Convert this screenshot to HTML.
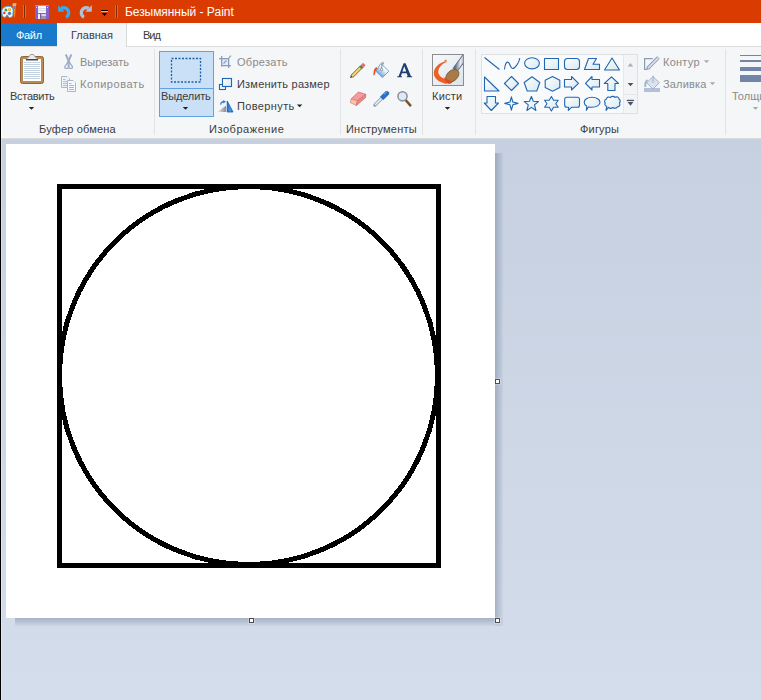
<!DOCTYPE html>
<html><head><meta charset="utf-8">
<style>
*{margin:0;padding:0;box-sizing:border-box}
html,body{width:761px;height:700px;overflow:hidden;background:#cdd6e5;font-family:"Liberation Sans",sans-serif}
.a{position:absolute}
.t{position:absolute;font-size:11px;line-height:11px;white-space:nowrap;color:#3c3c3c}
.g{color:#8a8a8a}
#title{left:0;top:0;width:761px;height:23px;background:#da3b01}
#tabs{left:0;top:23px;width:761px;height:23px;background:#fff}
#file{left:1px;top:23px;width:56px;height:23px;background:#1979ca}
#home{left:57px;top:23px;width:70px;height:24px;background:#f5f6f7;border-right:1px solid #dadbdc}
#ribbon{left:0;top:46px;width:761px;height:93px;background:#f5f6f7;border-top:1px solid #dadbdc;border-bottom:1px solid #d8d9d9}
#work{left:0;top:139px;width:761px;height:561px;background:linear-gradient(#c6d0e0,#d4ddeb)}
.sep{position:absolute;width:1px;background:#e2e3e4;top:49px;height:86px}
#lb{left:0;top:0;width:1px;height:700px;background:#000}
.h{position:absolute;width:5px;height:5px;background:#fff;border:1px solid #4e4e4e;box-shadow:0 0 0 1px rgba(255,255,255,.25)}
</style></head><body>
<div id="title" class="a"></div>
<div id="tabs" class="a"></div>
<div id="ribbon" class="a"></div>
<div id="file" class="a"></div>
<div id="home" class="a"></div>
<div id="work" class="a"></div>

<div class="t" style="left:125px;top:6px;font-size:12px;line-height:12px;color:#fff;letter-spacing:-0.06px">Безымянный - Paint</div>
<div class="t" style="left:16px;top:30px;color:#fff;letter-spacing:-0.33px">Файл</div>
<div class="t" style="left:71px;top:30px">Главная</div>
<div class="t" style="left:143px;top:30px;letter-spacing:-1px">Вид</div>

<div class="sep" style="left:154px"></div>
<div class="sep" style="left:340px"></div>
<div class="sep" style="left:422px"></div>
<div class="sep" style="left:475px"></div>
<div class="sep" style="left:725px"></div>

<div class="t" style="left:10px;top:91px;letter-spacing:-0.28px">Вставить</div>
<div class="t g" style="left:80px;top:57px">Вырезать</div>
<div class="t g" style="left:80px;top:79px;letter-spacing:0.55px">Копировать</div>
<div class="t" style="left:39px;top:124px;letter-spacing:0.18px">Буфер обмена</div>

<div class="a" style="left:159px;top:51px;width:55px;height:66px;background:#c9e0f7;border:1px solid #62a2e4"></div>
<div class="a" style="left:160px;top:88px;width:53px;height:1px;background:#62a2e4"></div>
<div class="t" style="left:161px;top:91px;letter-spacing:-0.14px">Выделить</div>
<div class="t g" style="left:237px;top:57px;letter-spacing:0.28px">Обрезать</div>
<div class="t" style="left:237px;top:79px;letter-spacing:0.21px">Изменить размер</div>
<div class="t" style="left:237px;top:101px;letter-spacing:0.375px">Повернуть</div>
<div class="t" style="left:209px;top:124px;letter-spacing:0.55px">Изображение</div>

<div class="t" style="left:346px;top:124px;letter-spacing:0.2px">Инструменты</div>
<div class="t" style="left:432px;top:91px;letter-spacing:0.25px">Кисти</div>

<div class="a" style="left:481px;top:54px;width:157px;height:60px;background:#f9fafc;border:1px solid #dfe0e2"></div>
<div class="a" style="left:623px;top:55px;width:14px;height:58px;background:#f3f4f6;border-left:1px solid #e6e7e9"></div>
<div class="a" style="left:624px;top:94px;width:13px;height:1px;background:#e6e7e9"></div>
<div class="t" style="left:580px;top:124px;letter-spacing:0.2px">Фигуры</div>
<div class="t g" style="left:663px;top:57px;letter-spacing:0.25px">Контур</div>
<div class="t g" style="left:663px;top:79px;letter-spacing:0.17px">Заливка</div>
<div class="t g" style="left:732px;top:91px">Толщина</div>

<!-- canvas shadow -->
<div class="a" style="left:495px;top:153px;width:8px;height:465px;background:linear-gradient(90deg,rgba(40,60,95,.26),rgba(40,60,95,.04))"></div>
<div class="a" style="left:15px;top:618px;width:480px;height:8px;background:linear-gradient(rgba(40,60,95,.26),rgba(40,60,95,.04))"></div>
<div class="a" style="left:495px;top:618px;width:8px;height:8px;background:linear-gradient(135deg,rgba(40,60,95,.16),rgba(40,60,95,.05))"></div>
<div class="a" style="left:6px;top:144px;width:489px;height:474px;background:#fff"></div>
<div class="h" style="left:495px;top:379px"></div>
<div class="h" style="left:249px;top:618px"></div>
<div class="h" style="left:495px;top:618px"></div>

<svg class="a" style="left:0;top:0" width="761" height="700">
<rect x="59.5" y="186.5" width="379" height="379" fill="none" stroke="#000" stroke-width="5"/>
<circle cx="248.5" cy="375.5" r="189" fill="none" stroke="#000" stroke-width="5" shape-rendering="crispEdges"/>
</svg>
<!-- ICONS -->
<svg class="a" style="left:0;top:0" width="761" height="140" viewBox="0 0 761 140">
<defs>
<linearGradient id="sg" x1="0" y1="0" x2="1" y2="1"><stop offset="0" stop-color="#ffffff"/><stop offset="1" stop-color="#d6e8f2"/></linearGradient>
<linearGradient id="bg1" x1="0" y1="0" x2="1" y2="1"><stop offset="0" stop-color="#f7f9fb"/><stop offset="1" stop-color="#dbe5ea"/></linearGradient>
<linearGradient id="gt" x1="0" y1="0" x2="1" y2="0"><stop offset="0" stop-color="#e8e8e8"/><stop offset="1" stop-color="#858585"/></linearGradient>
<linearGradient id="bk2" x1="0.2" y1="0.9" x2="0.8" y2="0.2"><stop offset="0" stop-color="#4f90d6"/><stop offset="0.75" stop-color="#ffffff"/></linearGradient>
<linearGradient id="bk" x1="0" y1="0" x2="1" y2="1"><stop offset="0" stop-color="#5e9ed8"/><stop offset="1" stop-color="#e6f0fa"/></linearGradient>
<linearGradient id="hd" x1="0" y1="0" x2="1" y2="0"><stop offset="0" stop-color="#5d6a82"/><stop offset=".5" stop-color="#e7ebf2"/><stop offset="1" stop-color="#7d879b"/></linearGradient>
</defs>
<!-- QAT: palette -->
<path d="M1.8,12 C1.6,8.6 4.6,6.3 8.4,6.3 C11.8,6.3 13.1,8.2 13.1,10.5 L12.9,14.5 C12.7,16.4 11.6,17.6 10.1,17.6 C8.9,17.6 8,16.8 7.6,15 L6.8,15 C6.3,16.8 5.2,17.5 4.2,17.3 C2.6,17 1.9,14.6 1.8,12 Z" fill="#f2f8fd" stroke="#55a6e2" stroke-width="1"/>
<circle cx="5.9" cy="9.9" r="1.5" fill="#3aa63a"/>
<circle cx="9.5" cy="9.5" r="1.6" fill="#f5a512"/><circle cx="9.5" cy="9.5" r="0.5" fill="#fff3c0"/>
<circle cx="4.3" cy="13" r="1.2" fill="#e23a2e"/>
<circle cx="9.5" cy="13.4" r="1.3" fill="#c04a30" stroke="#3a8ad0" stroke-width="0.9"/>
<path d="M13.6,8.6 L15.6,8.6 L14.9,17.8 L14.3,17.8 Z" fill="#f58a1a"/>
<path d="M13.8,8.6 L12.2,4.5 L13.5,3 L16.5,3.3 L15.6,8.6 Z" fill="#e8b06e"/>
<rect x="13.7" y="6" width="1.8" height="2.6" fill="#6a7a96"/>
<!-- separators -->
<rect x="23" y="5" width="3" height="13" fill="#e2683a"/><rect x="24" y="5" width="1" height="13" fill="#7a2a0a"/>
<rect x="115" y="5" width="3" height="13" fill="#e2683a"/><rect x="116" y="5" width="1" height="13" fill="#7a2a0a"/>
<!-- save -->
<rect x="35" y="5" width="14" height="14" fill="#8660d0"/>
<rect x="35" y="5" width="14" height="1" fill="#a68ae6"/>
<rect x="38" y="6" width="8" height="7" fill="#f6f7f8"/>
<rect x="38" y="8.2" width="8" height="0.9" fill="#d2d6dc"/><rect x="38" y="10.2" width="8" height="0.9" fill="#d2d6dc"/>
<rect x="36" y="7" width="1" height="1" fill="#e0d8f0"/><rect x="47" y="7" width="1" height="1" fill="#e0d8f0"/>
<rect x="38" y="14" width="8" height="5" fill="#9a9a9e"/>
<rect x="38" y="14" width="2" height="5" fill="#ececef"/>
<rect x="40" y="14" width="1.2" height="4.5" fill="#7a52c8"/>
<rect x="41.5" y="14" width="4.5" height="2" fill="#d8d8dc"/>
<!-- undo -->
<path d="M58.2,5.2 L58.2,11.7 L64.7,11.7 Z" fill="#38aaee"/>
<path d="M61.3,8.3 A4.6,4.6 0 1 1 66,17.3" fill="none" stroke="#38aaee" stroke-width="3.4"/>
<!-- redo -->
<path d="M91.8,5.2 L91.8,11.7 L85.3,11.7 Z" fill="#adc1d9"/>
<path d="M88.7,8.3 A4.6,4.6 0 1 0 84,17.3" fill="none" stroke="#adc1d9" stroke-width="3.4"/>
<!-- qat dropdown -->
<rect x="101" y="10" width="7" height="1" fill="#000"/>
<rect x="101" y="11" width="7" height="1" fill="#f4a98a"/>
<path d="M101.8,13 L107.2,13 L104.5,16 Z" fill="#000"/>

<!-- clipboard -->
<rect x="20.5" y="56.5" width="23" height="27" rx="2" fill="#b98a52" stroke="#94663a" stroke-width="1"/>
<rect x="23" y="59" width="18" height="22" fill="#fff"/>
<g fill="#c3d3e2"><rect x="24" y="62" width="16" height="1"/><rect x="24" y="64" width="16" height="1"/><rect x="24" y="66" width="16" height="1"/><rect x="24" y="68" width="16" height="1"/><rect x="24" y="70" width="16" height="1"/><rect x="24" y="72" width="16" height="1"/><rect x="24" y="74" width="16" height="1"/><rect x="24" y="76" width="16" height="1"/><rect x="24" y="78" width="16" height="1"/></g>
<path d="M26,59.5 L29.5,56 L30.5,54.5 L33.5,54.5 L34.5,56 L38,59.5 Z" fill="#ececec" stroke="#8a8a8a" stroke-width="0.8"/>
<rect x="26" y="59" width="12" height="1.5" fill="#4a4a4a"/>
<!-- scissors -->
<g stroke="#9aabc6" fill="none" stroke-linejoin="round"><path d="M65.8,54.5 L69.6,62.8" stroke-width="1.9"/><path d="M71.4,54.5 L67.6,62.8" stroke-width="1.9"/>
<path d="M67.2,63.2 L64.8,66.6 Q64.3,68.3 65.9,68.3 L67.5,68.3 Q68.2,68.1 68.2,67.4 L68.1,63.6 Z" stroke-width="1.2"/>
<path d="M70,63.2 L72.4,66.6 Q72.9,68.3 71.3,68.3 L69.7,68.3 Q69,68.1 69,67.4 L69.1,63.6 Z" stroke-width="1.2"/></g>
<!-- copy -->
<path d="M61.5,76.5 H67 L69.5,79 V87.5 H61.5 Z" fill="#eef3fa" stroke="#a9b7cd" stroke-width="1"/>
<rect x="67" y="77.5" width="1.5" height="1.5" fill="#ffffff"/>
<g stroke="#b0bdd2" stroke-width="1"><path d="M63,79.5 H65.5 M63,81.5 H67.5 M63,83.5 H67.5 M63,85.5 H67.5"/></g>
<path d="M67.5,80.5 H73 L75.5,83 V91.5 H67.5 Z" fill="#f6f9fd" stroke="#a9b7cd" stroke-width="1"/>
<rect x="73" y="81.5" width="1.5" height="1.5" fill="#ffffff"/>
<g stroke="#a9b7cd" stroke-width="1"><path d="M69,83.5 H71.5 M69,85.5 H74 M69,87.5 H74 M69,89.5 H74"/></g>
<!-- select dashed -->
<rect x="171.5" y="58.5" width="29" height="23.5" fill="none" stroke="#1f5fa8" stroke-width="1.3" stroke-dasharray="2,1.5"/>
<!-- crop -->
<rect x="222" y="59" width="6" height="6" fill="#e2eaf6"/>
<g fill="#8c9dbb"><rect x="221" y="56" width="1.3" height="10.5"/><rect x="219" y="58" width="10" height="1.3"/><rect x="228" y="58" width="1.3" height="10"/><rect x="221" y="65" width="10" height="1.3"/></g>
<path d="M223.5,63.5 L226.5,60.5 M228.8,57.8 L231,55.6" stroke="#8c9dbb" stroke-width="1.2"/>
<!-- resize -->
<rect x="219.5" y="84.5" width="6" height="5" fill="#f4f8fc" stroke="#1f67b3" stroke-width="1.1"/>
<rect x="222.5" y="78.5" width="9" height="8" fill="url(#sg)" stroke="#1f67b3" stroke-width="1.1"/>
<!-- rotate -->
<linearGradient id="gt2" x1="0" y1="0" x2="1" y2="0"><stop offset="0" stop-color="#f4f4f4"/><stop offset="1" stop-color="#8c8c8c"/></linearGradient>
<linearGradient id="bt" x1="0" y1="0" x2="1" y2="0"><stop offset="0" stop-color="#1a66b8"/><stop offset=".5" stop-color="#4aa0e6"/><stop offset="1" stop-color="#1a66b8"/></linearGradient>
<path d="M217,112 L226,112 L226,105.8 Z" fill="url(#gt2)"/>
<path d="M227.2,101 L227.2,112 L233,112 Z" fill="url(#bt)" stroke="#1762b0" stroke-width="0.8"/>
<path d="M220.8,104.6 C220.6,102.6 221.8,101.8 224,101.8" fill="none" stroke="#2a7ee6" stroke-width="1.4"/>
<path d="M223.2,100 L226,101.8 L223.2,103.6 Z" fill="#2a7ee6"/>
<!-- pencil -->
<path d="M351.8,76.6 L361.3,67.1" stroke="#7e6434" stroke-width="3.6"/>
<path d="M351.8,76.6 L361.3,67.1" stroke="#f5d877" stroke-width="2.1"/>
<path d="M349.9,78.2 L351,75.2 L352.9,77.1 Z" fill="#404040"/>
<path d="M360.4,68 L362.2,66.2" stroke="#3b9448" stroke-width="3.6"/>
<path d="M362,66.4 L364.3,64.1" stroke="#d9707a" stroke-width="3.6"/>
<!-- bucket -->
<path d="M376.8,67 C374.8,67.8 373.6,70 373.6,72.5 L373.4,75.8 L375,74.2 L375.6,71 L377.2,69.2 Z" fill="#e94c14"/>
<path d="M380.8,63.5 L388.8,71.2 L382.4,77.6 L375.9,71.2 Z" fill="url(#bk2)" stroke="#5d9ad8" stroke-width="0.9"/>
<path d="M382.6,62.2 C383.4,62.2 383.6,63.3 383.4,64.3 M382.2,62.5 L381.6,69" fill="none" stroke="#7c7c7c" stroke-width="0.9"/>
<circle cx="381.6" cy="69.6" r="1.1" fill="#fff" stroke="#7c7c7c" stroke-width="0.8"/>
<!-- eraser -->
<path d="M351.1,98.9 L358.4,92.1 L365.8,94.3 L357.4,100.8 Z" fill="#f79c9c" stroke="#d27070" stroke-width="0.8"/>
<path d="M351.1,98.9 L357.4,100.8 L356.4,105.5 L350.3,102.6 Z" fill="#fec3ab" stroke="#d88a78" stroke-width="0.8"/>
<path d="M357.4,100.8 L365.8,94.3 L365.6,97.6 L356.4,105.5 Z" fill="#e58a86" stroke="#d07070" stroke-width="0.8"/>
<!-- eyedropper -->
<path d="M374.9,105.1 L381.6,98.4" stroke="#8d98a8" stroke-width="3.2" stroke-linecap="round"/>
<path d="M375.1,104.9 L381.6,98.4" stroke="#e6f0fb" stroke-width="1.5"/>
<path d="M380,96.8 L383.3,100 L389.2,94.3 L389.2,92.6 L387.6,91 L385.8,91 Z" fill="#2b6fc0"/>
<path d="M383.2,94.2 L386.8,90.8 L387.8,91.2 L384.4,95 Z" fill="#5b9be0"/>
<!-- magnifier -->
<path d="M406,100.5 L410.3,105.3" stroke="#7a5230" stroke-width="2.6" stroke-linecap="round"/>
<circle cx="402.5" cy="96.3" r="4.6" fill="#dbe9fb" stroke="#8e8e8e" stroke-width="1.5"/>
<!-- text A -->
<path fill-rule="evenodd" d="M397.3,77.2 H402 V76.2 H400.9 L401.9,73.2 H406.7 L407.8,76.2 H406.8 V77.2 H412.2 V76.2 H411 L405.6,63.3 H403.6 L398.6,76.2 H397.3 Z M402.4,71.6 L404.3,66.2 L406.2,71.6 Z" fill="#1f3f73"/>
<!-- brushes -->
<clipPath id="bc"><rect x="433" y="55" width="30" height="30"/></clipPath>
<rect x="432.5" y="54.5" width="31" height="31" fill="url(#bg1)" stroke="#8d8d8d" stroke-width="1"/>
<g clip-path="url(#bc)">
<path d="M455,70 L466,55" stroke="#5f6a80" stroke-width="6"/>
<path d="M455,70 L466,55" stroke="url(#hd)" stroke-width="4.2"/>
</g>
<path d="M446,61 C440,62.5 434,67 433.8,73 C433.6,78 438.5,82.5 447,84 L448,79.5 C442,78.8 438,75.5 438.3,71.5 C438.6,67 442.5,63.5 446.5,62 Z" fill="#ee5f24"/>
<path d="M444.5,60 C446,59.5 447.5,60 446.5,61.8 L445,61.5 Z" fill="#f07a48"/>
<ellipse cx="452.3" cy="75.8" rx="7.6" ry="5.2" transform="rotate(-42 452.3 75.8)" fill="#a97a48" stroke="#7c5530" stroke-width="0.8"/>
<path d="M443.5,77 C445,80 446.5,82.5 448,83.8 C450.5,84 452,83 452.5,81.5 C449,80.5 446,79 443.5,77 Z" fill="#e2481a"/>
<!-- shapes gallery -->
<g fill="url(#sg)" stroke="#2066b0" stroke-width="1.1" stroke-linejoin="round">
<path d="M484.5,57.5 L499.5,69.5" fill="none"/>
<path d="M504.5,69.5 C505,63 507,61.5 508.5,62.5 C510,63.5 510.5,68.5 512.5,68.5 C515,68.5 519,63 519.8,58" fill="none"/>
<ellipse cx="532" cy="63.3" rx="7.4" ry="5.6"/>
<rect x="544.5" y="58.5" width="14" height="11"/>
<rect x="564.5" y="58.5" width="15" height="11" rx="3"/>
<path d="M588.5,58.5 H596.5 L593,64.3 H599.5 V69.5 H584.5 Z"/>
<path d="M612,58 L619.5,70 H604.5 Z"/>
<path d="M484.5,77 V91 H499 Z"/>
<path d="M511.5,76.5 L518.5,83.5 L511.5,90.5 L504.5,83.5 Z"/>
<path d="M532,76.8 L539.8,82.5 L536.8,91 H527.2 L524.2,82.5 Z"/>
<path d="M552.5,76.5 L559.8,80.3 V87.5 L552.5,91.2 L545.2,87.5 V80.3 Z"/>
<path d="M564.5,79.5 H571.5 V76.5 L578.5,83.3 L571.5,90 V87 H564.5 Z"/>
<path d="M599.5,79.5 H592 V76.5 L585.5,83.3 L592,90 V87 H599.5 Z"/>
<path d="M611.5,76.8 L618.5,83.5 H615 V90.5 H607.8 V83.5 H604.3 Z"/>
<path d="M487,96.5 H495.5 V103 H498.5 L491.3,110.5 L484.3,103 H487 Z"/>
<path d="M511.4,96.8 L512.8,102 L518,103.4 L512.8,104.8 L511.4,110.2 L510,104.8 L504.8,103.4 L510,102 Z"/>
<path d="M531.4,96.5 L533.3,101.3 L538.5,101.6 L534.5,104.9 L535.9,110.5 L531.4,107.4 L526.9,110.5 L528.3,104.9 L524.3,101.6 L529.5,101.3 Z"/>
<path d="M551.4,96.5 L553.6,100.3 L558.2,100.3 L555.8,103.8 L558.2,107.3 L553.6,107.3 L551.4,111 L549.2,107.3 L544.6,107.3 L547,103.8 L544.6,100.3 L549.2,100.3 Z"/>
<path d="M567,97.3 H577.5 Q579.5,97.3 579.5,99.3 V105.3 Q579.5,107.3 577.5,107.3 H571.5 L568.3,110.3 L568.6,107.3 H567 Q564.7,107.3 564.7,105.3 V99.3 Q564.7,97.3 567,97.3 Z"/>
<path d="M592,97.3 C596.5,97.3 600,99.5 600,102.3 C600,105.2 596.5,107.3 592,107.3 C590.8,107.3 589.5,107.2 588.5,107 L586.3,110.3 L586.8,106.2 C585,105.3 584.2,103.9 584.2,102.3 C584.2,99.5 587.5,97.3 592,97.3 Z"/>
<path d="M606.5,99 C606.5,97 609,96.5 610.5,97.5 C611.5,96 614,96 615,97.3 C616.5,96.3 619,97 619,99 C620.5,100 620.5,102 619.5,103 C620.5,104.5 619.5,107 617.5,106.8 C616.8,108.5 614,108.5 613,107.5 C611.5,108.5 609.5,108.3 608.5,107.3 L606,110.3 L606.8,106.3 C605,106 604.3,104 605.3,103 C604,102 604.5,99.5 606.5,99 Z"/>
</g>
<!-- gallery scroll -->
<path d="M627.6,66.4 L633.2,66.4 L630.4,63 Z" fill="#a4aebd"/>
<path d="M627.6,83 L633.4,83 L630.5,86.3 Z" fill="#4a5468"/>
<rect x="626.8" y="99.8" width="7.2" height="1.3" fill="#4a5468"/>
<path d="M627.6,102 L633.4,102 L630.5,105.8 Z" fill="#4a5468"/>
<!-- outline icon -->
<path d="M652.8,58.6 H644.6 V69.4 H647.6" fill="none" stroke="#8a9bb8" stroke-width="1.2"/>
<path d="M647.6,68.6 L658.4,57.6" stroke="#8a9bb8" stroke-width="3.6"/>
<path d="M647.8,68.4 L658.2,57.8" stroke="#d8e0ec" stroke-width="1.8"/>
<path d="M646.4,69.6 L647.4,67.2 L648.8,68.6 Z" fill="#8a9bb8"/>
<!-- fill icon -->
<rect x="644" y="88" width="16" height="4" fill="#b3c0d5"/>
<path d="M647.5,80 C645.5,81.5 645,84.5 645.5,87" fill="none" stroke="#a4b4cc" stroke-width="2"/>
<path d="M653,76.5 L659.3,82.8 L653,89 L646.7,82.8 Z" fill="#dce4ef" stroke="#a0b1ca" stroke-width="1"/>
<path d="M653.3,75.5 L653,81" stroke="#a0b1ca" stroke-width="1"/>
<circle cx="653" cy="81.5" r="1" fill="#fff" stroke="#a0b1ca" stroke-width="0.8"/>
<!-- thickness -->
<g fill="#7384a9"><rect x="740" y="55" width="21" height="1"/><rect x="740" y="60" width="21" height="2"/><rect x="740" y="67" width="21" height="4"/><rect x="740" y="75" width="21" height="7"/></g>
<!-- dropdown arrows -->
<g fill="#222">
<path d="M28.8,107 L34.2,107 L31.5,109.8 Z"/>
<path d="M182.8,107 L188.2,107 L185.5,109.8 Z"/>
<path d="M296.9,104.4 L302.3,104.4 L299.6,107.3 Z"/>
<path d="M444.8,107 L450.2,107 L447.5,109.8 Z"/>
</g>
<g fill="#a8a8a8">
<path d="M703.8,60.2 L709.2,60.2 L706.5,63 Z"/>
<path d="M709.8,82.2 L715.2,82.2 L712.5,85 Z"/>
<path d="M752.8,107 L758.2,107 L755.5,109.8 Z"/>
</g>
</svg>
<!-- /ICONS -->
<div class="a" style="left:0;top:137px;width:761px;height:1px;background:#f8f8f9"></div>
<div class="a" style="left:1px;top:47px;width:1px;height:91px;background:#fff"></div>
<div class="a" style="left:1px;top:139px;width:1px;height:561px;background:rgba(255,255,255,.3)"></div>
<div id="lb" class="a"></div>
</body></html>
